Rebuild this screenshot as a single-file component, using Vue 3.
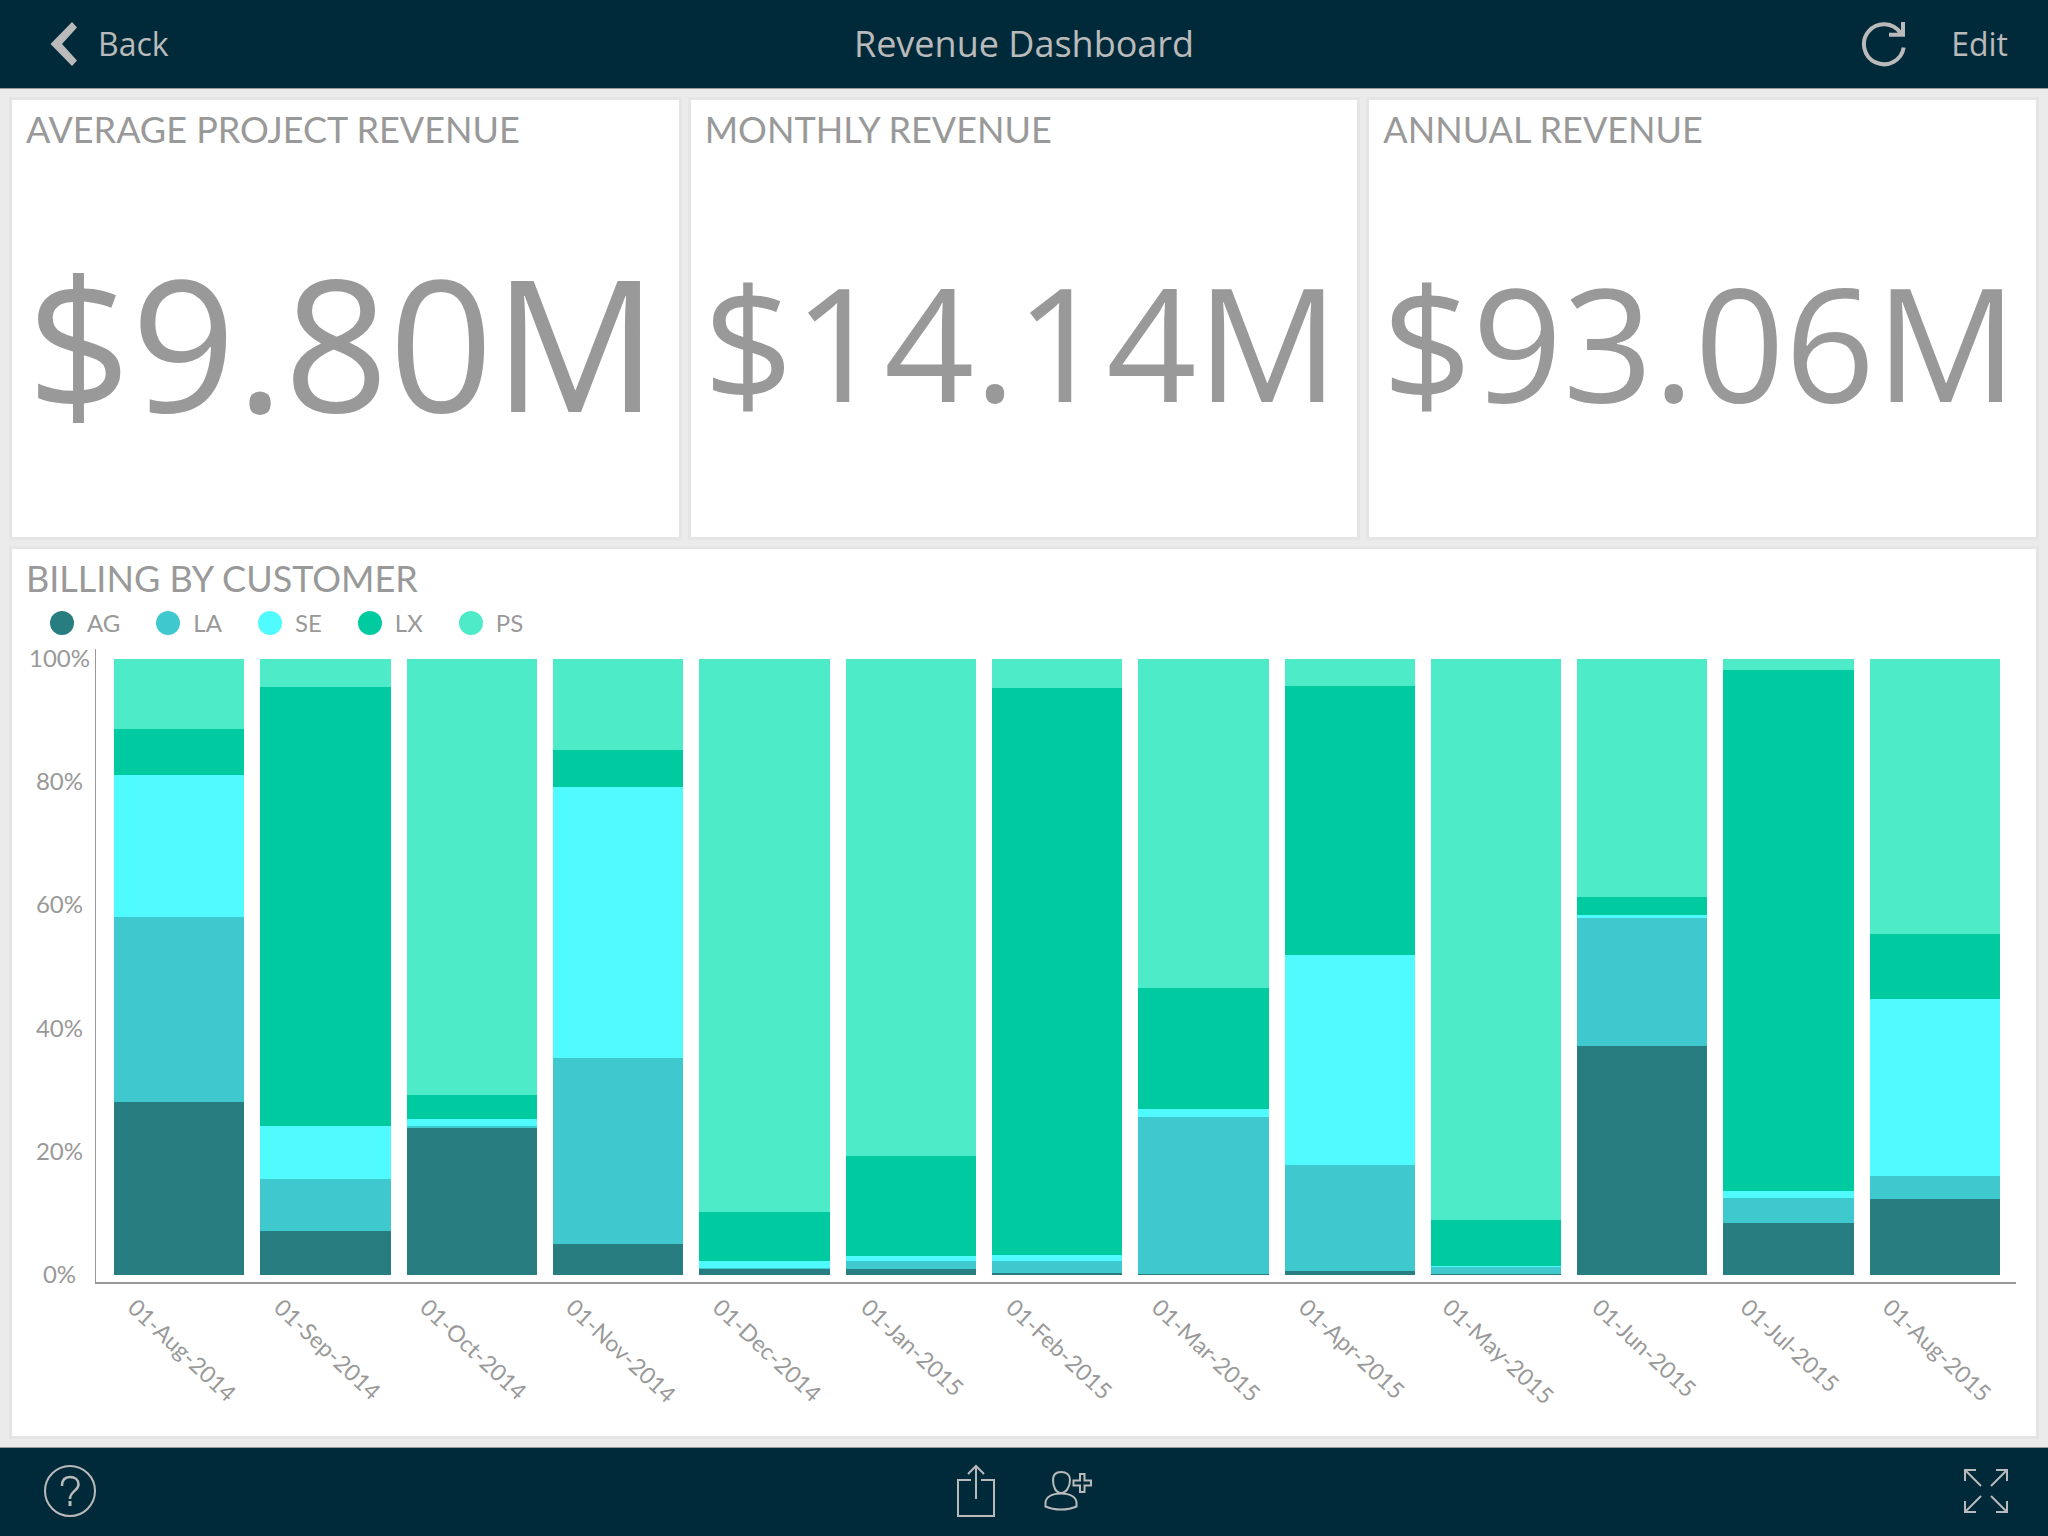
<script setup>
const metrics = [
  { title: 'AVERAGE PROJECT REVENUE', value: '$9.80M', large: true },
  { title: 'MONTHLY REVENUE', value: '$14.14M', large: false },
  { title: 'ANNUAL REVENUE', value: '$93.06M', large: false },
]

const series = ['AG', 'LA', 'SE', 'LX', 'PS']
const ticks = ['100%', '80%', '60%', '40%', '20%', '0%']

// Share of billing per customer (percent), in the order of `series`.
const months = [
  { label: '01-Aug-2014', shares: [28.1, 30.0, 23.1, 7.4, 11.4] },
  { label: '01-Sep-2014', shares: [7.2, 8.4, 8.6, 71.3, 4.5] },
  { label: '01-Oct-2014', shares: [23.9, 0.3, 1.2, 3.9, 70.7] },
  { label: '01-Nov-2014', shares: [5.0, 30.3, 44.0, 6.0, 14.7] },
  { label: '01-Dec-2014', shares: [1.0, 0.2, 1.1, 8.0, 89.7] },
  { label: '01-Jan-2015', shares: [1.0, 1.2, 0.9, 16.3, 80.6] },
  { label: '01-Feb-2015', shares: [0.4, 1.8, 1.0, 92.1, 4.7] },
  { label: '01-Mar-2015', shares: [0.2, 25.5, 1.3, 19.6, 53.4] },
  { label: '01-Apr-2015', shares: [0.7, 17.2, 34.1, 43.6, 4.4] },
  { label: '01-May-2015', shares: [0.1, 1.2, 0.2, 7.5, 91.0] },
  { label: '01-Jun-2015', shares: [37.1, 20.8, 0.6, 2.9, 38.6] },
  { label: '01-Jul-2015', shares: [8.5, 4.0, 1.1, 84.6, 1.8] },
  { label: '01-Aug-2015', shares: [12.3, 3.8, 28.7, 10.6, 44.6] },
]
</script>

<template>
  <div class="page">
    <header class="bar">
      <button type="button" class="action back">
        <svg width="28" height="46" viewBox="0 0 28 46" aria-hidden="true">
          <path d="M22 1 27 6.500 12 23l15 16.500L22 45 .5 23Z" fill="#bababa" />
        </svg>
        Back
      </button>
      <h1>Revenue Dashboard</h1>
      <div class="right">
        <button type="button" class="action" aria-label="Refresh">
          <svg width="46" height="46" viewBox="0 0 46 46" fill="none" stroke="#bababa" stroke-width="4" aria-hidden="true">
            <path d="M42.700 26.500A20 20 0 1 1 39.500 12" />
            <path d="M42 1v12.700H28" />
          </svg>
        </button>
        <button type="button" class="action">Edit</button>
      </div>
    </header>

    <main>
      <section v-for="m in metrics" :key="m.title" class="card metric">
        <h2>{{ m.title }}</h2>
        <p :class="{ large: m.large }">{{ m.value }}</p>
      </section>

      <section class="card chart">
        <h2>BILLING BY CUSTOMER</h2>
        <ul class="legend">
          <li v-for="s in series" :key="s"><span class="dot" :class="s"></span>{{ s }}</li>
        </ul>
        <div class="plot">
          <div class="ticks">
            <span v-for="t in ticks" :key="t">{{ t }}</span>
          </div>
          <div class="area">
            <div v-for="m in months" :key="m.label" class="column">
              <div
                v-for="(v, i) in m.shares"
                :key="i"
                :class="series[i]"
                :style="{ height: v + '%' }"
              ></div>
            </div>
          </div>
        </div>
        <div class="labels">
          <div v-for="m in months" :key="m.label"><span>{{ m.label }}</span></div>
        </div>
      </section>
    </main>

    <footer class="bar">
      <button type="button" class="action help" aria-label="Help">
        <svg width="52" height="52" viewBox="0 0 52 52" fill="none" stroke="#bababa" stroke-width="2" aria-hidden="true">
          <circle cx="26" cy="26" r="25" />
          <path d="M18 21C18 15 21 12 26 12S34.500 15 34.500 19.500C34.500 26 26 26 26 34" stroke-width="2.500" />
          <path d="M26 36v5" stroke-width="3" />
        </svg>
      </button>
      <div class="center">
        <button type="button" class="action" aria-label="Share">
          <svg width="40" height="54" viewBox="0 0 40 54" fill="none" stroke="#bababa" stroke-width="2" aria-hidden="true">
            <path d="M15 16H2v36h36V16H25M20 35V2M12 10l8-8 8 8" />
          </svg>
        </button>
        <button type="button" class="action" aria-label="Add user">
          <svg width="48" height="40" viewBox="0 0 48 40" fill="none" stroke="#bababa" stroke-width="2" aria-hidden="true">
            <path d="M17 1C11.500 1 9 4 9 9C9 16 12 22 17 22S26 16 26 9C26 4 22.500 1 17 1Z" />
            <path d="M17 22.500C8 22.500 1.500 26 1.500 32V35.500Q8 38.500 17 38.500T32.500 35.500V32C32.500 26 26 22.500 17 22.500Z" />
            <path d="M36 3h4.500v6.500H47v5h-6.500V21H36v-6.500h-6.500v-5H36Z" />
          </svg>
        </button>
      </div>
      <button type="button" class="action full" aria-label="Full screen">
        <svg width="44" height="44" viewBox="0 0 44 44" fill="none" stroke="#bababa" stroke-width="2" aria-hidden="true">
          <path d="M12 1H1v11M1 1l16 16M32 1h11v11M43 1 27 17M12 43H1V32M1 43l16-16M32 43h11V32M43 43 27 27" />
        </svg>
      </button>
    </footer>
  </div>
</template>

<style>
body {
  margin: 0;
}
</style>

<style scoped>
.page {
  min-height: 100vh;
  display: flex;
  flex-direction: column;
  background: #ebebeb;
  color: #999;
  font-family: Lato, sans-serif;
}
.bar {
  height: 88px;
  display: grid;
  grid-template-columns: 1fr auto 1fr;
  align-items: center;
  padding: 0 40px;
  background: #002a3a;
  color: #bababa;
  font-family: 'Open Sans', sans-serif;
}
header.bar {
  border-bottom: 1px solid #999;
}
footer.bar {
  height: 86px;
  padding-bottom: 2px;
  border-top: 1px solid #999;
}
.action {
  display: flex;
  align-items: center;
  justify-self: start;
  padding: 0;
  border: 0;
  background: none;
  color: inherit;
  font: inherit;
  font-size: 32px;
  line-height: 44px;
}
.back {
  gap: 20px;
  padding-left: 10px;
}
.help {
  padding-left: 4px;
}
.full {
  justify-self: end;
}
h1 {
  margin: 0;
  font-size: 36px;
  line-height: 44px;
  font-weight: 400;
}
.right {
  display: flex;
  justify-content: flex-end;
  gap: 44px;
}
.center {
  display: flex;
  align-items: center;
  gap: 48px;
}
main {
  flex: 1;
  display: grid;
  grid-template-columns: repeat(3, 1fr);
  grid-template-rows: 437px 1fr;
  gap: 12px;
  padding: 11px 12px;
}
.card {
  min-width: 0;
  display: flex;
  flex-direction: column;
  background: #fff;
  box-shadow: 0 0 0 3px #e5e5e5;
}
h2 {
  margin: 0;
  padding: 7px 14px 1px;
  font-size: 36px;
  line-height: 44px;
  font-weight: 400;
  white-space: nowrap;
}
.metric p {
  flex: 1;
  display: flex;
  align-items: center;
  justify-content: center;
  margin: 0;
  padding: 0 6px 6px 0;
  font: 158px/1.36 'Open Sans', sans-serif;
}
.metric p.large {
  font-size: 183px;
}
.chart {
  grid-column: 1 / -1;
}
.legend {
  display: flex;
  gap: 36px;
  margin: 0;
  padding: 6px 38px 10px;
  list-style: none;
  font-size: 24px;
  line-height: 32px;
}
.legend li {
  display: flex;
  align-items: center;
  gap: 13px;
}
.dot {
  width: 24px;
  height: 24px;
  border-radius: 50%;
}
.plot {
  flex: 1;
  display: flex;
  padding: 0 20px 0 12px;
}
.ticks {
  width: 71px;
  display: flex;
  flex-direction: column;
  justify-content: space-between;
  align-items: center;
  margin: -7px 0 -6px;
  font-size: 24px;
  line-height: 32px;
}
.area {
  flex: 1;
  display: flex;
  gap: 16px;
  padding: 10px 16px 7px 18px;
  border-left: 1px solid #999;
  border-bottom: 2px solid #999;
}
.column {
  flex: 1;
  display: flex;
  flex-direction: column-reverse;
}
.labels {
  height: 152px;
  display: flex;
  gap: 16px;
  padding: 0 36px 0 102px;
  font-size: 23px;
  line-height: 30px;
}
.labels div {
  flex: 1;
  min-width: 0;
  display: flex;
  justify-content: center;
  align-items: flex-start;
  padding-top: 8px;
}
.labels span {
  white-space: nowrap;
  transform-origin: 0 0;
  transform: translateX(23%) rotate(43deg);
}
.AG { background: #287d80; }
.LA { background: #3fc8cd; }
.SE { background: #4ffbff; }
.LX { background: #00cba0; }
.PS { background: #4eebc8; }
</style>
